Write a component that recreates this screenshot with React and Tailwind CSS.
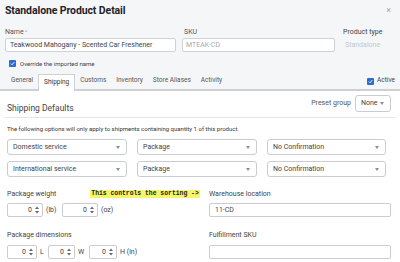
import React from "react";

function Caret() {
  return (
    <svg width="4" height="3" viewBox="0 0 4 3" className="shrink-0">
      <path d="M0 0 L4 0 L2 3 Z" fill="#8a8f96" />
    </svg>
  );
}

function Spin() {
  return (
    <svg width="4" height="8" viewBox="0 0 4 8" className="shrink-0">
      <path d="M0 3 L4 3 L2 0.5 Z" fill="#666" />
      <path d="M0 5 L4 5 L2 7.5 Z" fill="#666" />
    </svg>
  );
}

function Select({ className, text }) {
  return (
    <div className={"flex items-center justify-between border border-[#c9cdd2] rounded-[3px] bg-white pl-[5px] pr-[6px] text-[7px] text-[#444] " + className}>
      <span>{text}</span>
      <Caret />
    </div>
  );
}

function Num({ className }) {
  return (
    <div className={"h-[14px] border border-[#c9cdd2] rounded-[2px] bg-white flex items-center justify-end gap-[3px] pr-[3px] text-[7px] text-[#444] " + className}>
      <span>0</span>
      <Spin />
    </div>
  );
}

function Check() {
  return (
    <div className="w-[7px] h-[7px] rounded-[1px] bg-[#2f6ccf] flex items-center justify-center">
      <svg width="5" height="5" viewBox="0 0 5 5">
        <path d="M0.8 2.6 L2 3.8 L4.2 1.2" stroke="white" strokeWidth="0.9" fill="none" />
      </svg>
    </div>
  );
}

export default function App() {
  const tabs = ["General", "Shipping", "Customs", "Inventory", "Store Aliases", "Activity"];
  return (
    <div className="w-[400px] h-[262px] overflow-hidden bg-white text-[#333] font-['Roboto',sans-serif]">
      <div className="bg-[#f5f6f8]">
        <div className="flex items-start justify-between h-[27px] pl-[5px] pr-[9px] pt-[4px]">
          <div className="text-[10.5px] font-bold text-[#1f2328] leading-[13px] tracking-[-0.1px]">Standalone Product Detail</div>
          <div className="text-[9px] text-[#a0a4a8] leading-[9px] mt-[2px]">×</div>
        </div>
        <div className="flex pl-[5px]">
          <div className="w-[171px]">
            <div className="h-[11px] text-[7px] leading-[11px] text-[#555]">Name<span className="text-[5px] align-top text-[#999]"> *</span></div>
            <div className="h-[14px] border border-[#cfd3d8] rounded-[2px] bg-white flex items-center px-[4px] text-[7px] text-[#444]">Teakwood Mahogany - Scented Car Freshener</div>
          </div>
          <div className="ml-[6px] w-[153px]">
            <div className="h-[11px] text-[7px] leading-[11px] text-[#555] pl-[2px]">SKU</div>
            <div className="h-[14px] border border-[#cfd3d8] rounded-[2px] bg-white flex items-center px-[3px] text-[7px] text-[#aaa]">MTEAK-CD</div>
          </div>
          <div className="ml-[8px]">
            <div className="h-[11px] text-[7px] leading-[11px] text-[#444]">Product type</div>
            <div className="h-[14px] flex items-center pl-[2px] text-[7px] text-[#c3c7cc]">Standalone</div>
          </div>
        </div>
        <div className="flex items-center gap-[4px] pl-[9px] mt-[8px] h-[7px]">
          <Check />
          <span className="text-[6px] text-[#444]">Override the imported name</span>
        </div>
        <div className="flex items-end mt-[5px] pl-[6px] pr-[5px] border-b-2 border-[#cdd0d4] h-[19px]">
          {tabs.map((t) =>
            t === "Shipping" ? (
              <div key={t} className="h-[17px] -mb-[2px] px-[5px] bg-white border border-b-0 border-[#cdd0d4] flex items-center text-[6.5px] text-[#333]">{t}</div>
            ) : (
              <div key={t} className="h-[16px] px-[5px] flex items-center text-[6.5px] text-[#555]">{t}</div>
            )
          )}
          <div className="ml-auto h-[16px] flex items-center gap-[3px]">
            <Check />
            <span className="text-[6.5px] text-[#444]">Active</span>
          </div>
        </div>
      </div>

      <div className="px-[5px]">
        <div className="flex justify-between items-start pt-[4px] h-[27px] border-b border-[#e3e5e8]">
          <div className="pl-[2px] mt-[9px] text-[8.5px] leading-[9px] text-[#444]">Shipping Defaults</div>
          <div className="flex items-center gap-[4px] pr-[4px]">
            <span className="text-[7px] text-[#555]">Preset group</span>
            <Select className="w-[36px] h-[17px]" text="None" />
          </div>
        </div>
        <div className="pl-[2px] mt-[7px] text-[6px] leading-[7px] text-[#333]">The following options will only apply to shipments containing quantity 1 of this product.</div>
        <div className="pl-[2px] mt-[7px] flex flex-col gap-[6px]">
          <div className="flex gap-[10px]">
            <Select className="w-[120px] h-[16px]" text="Domestic service" />
            <Select className="w-[120px] h-[16px]" text="Package" />
            <Select className="w-[119px] h-[16px]" text="No Confirmation" />
          </div>
          <div className="flex gap-[10px]">
            <Select className="w-[120px] h-[16px]" text="International service" />
            <Select className="w-[120px] h-[16px]" text="Package" />
            <Select className="w-[119px] h-[16px]" text="No Confirmation" />
          </div>
        </div>

        <div className="pl-[2px] mt-[13px] grid grid-cols-[202px_182px]">
          <div>
            <div className="flex items-center h-[8px]">
              <span className="text-[7px] text-[#444]">Package weight</span>
              <span className="ml-[34px] bg-[#f5f56a] px-[1px] text-[6.4px] font-bold leading-[8px] font-['Liberation_Mono',monospace] text-[#222] whitespace-nowrap">This controls the sorting -&gt;</span>
            </div>
            <div className="mt-[5px] flex items-center">
              <Num className="w-[36px]" />
              <span className="ml-[3px] w-[16px] text-[7px] text-[#444]">(lb)</span>
              <Num className="w-[36px]" />
              <span className="ml-[3px] text-[7px] text-[#444]">(oz)</span>
            </div>
            <div className="mt-[14px] h-[8px] flex items-center text-[7px] text-[#444]">Package dimensions</div>
            <div className="mt-[6px] flex items-center text-[7px] text-[#444]">
              <Num className="w-[30px]" />
              <span className="ml-[3px] w-[8px]">L</span>
              <Num className="w-[27px]" />
              <span className="ml-[3px] w-[11px]">W</span>
              <Num className="w-[28px]" />
              <span className="ml-[3px]">H (in)</span>
            </div>
          </div>
          <div>
            <div className="h-[8px] flex items-center text-[7px] text-[#444]">Warehouse location</div>
            <div className="mt-[5px] h-[14px] border border-[#c9cdd2] rounded-[2px] flex items-center px-[5px] text-[7px] text-[#444]">11-CD</div>
            <div className="mt-[14px] h-[8px] flex items-center text-[7px] text-[#444]">Fulfillment SKU</div>
            <div className="mt-[6px] h-[14px] border border-[#c9cdd2] rounded-[2px]"></div>
          </div>
        </div>
      </div>
    </div>
  );
}
